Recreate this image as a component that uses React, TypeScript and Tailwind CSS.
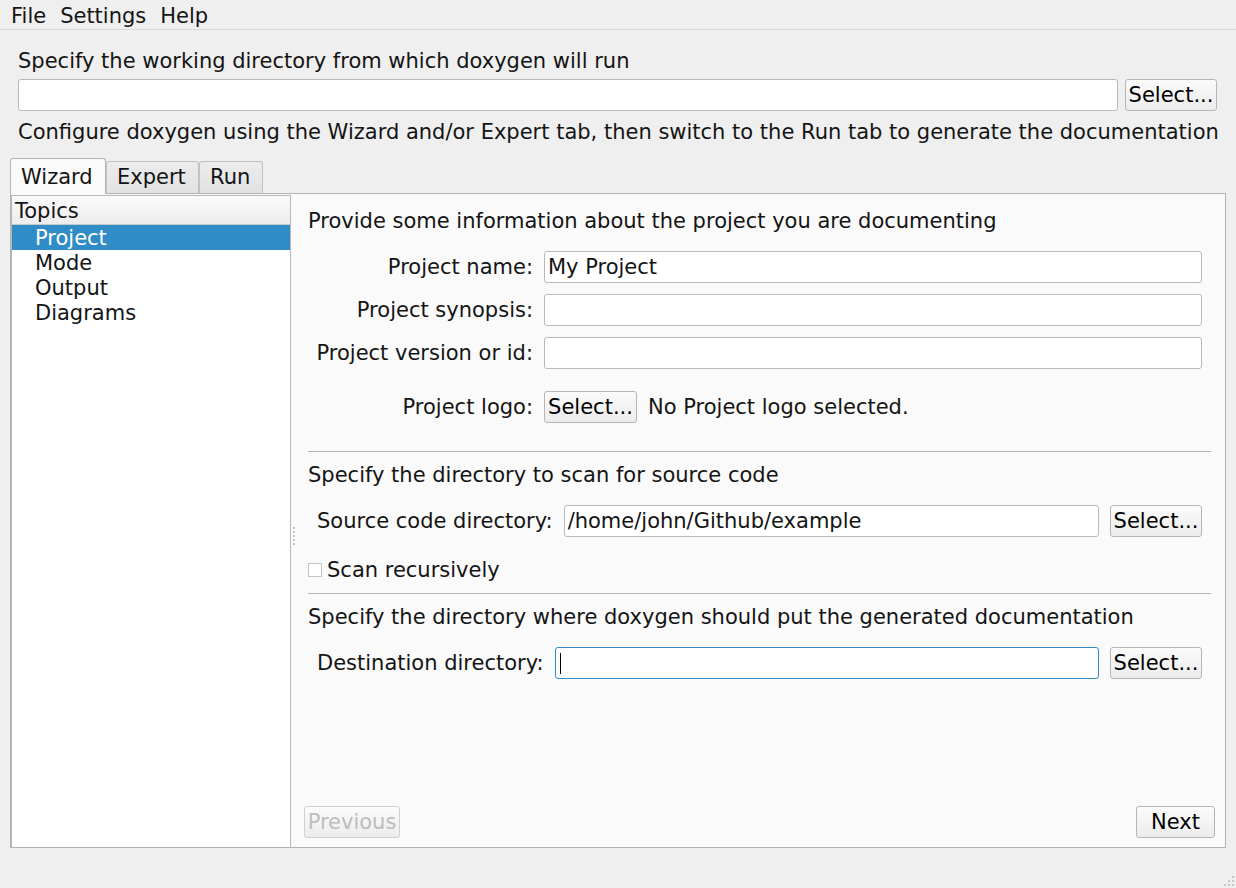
import React from "react";

function Button({ label, width, disabled }: { label: string; width: number; disabled?: boolean }) {
  return (
    <button
      style={{ width }}
      className={`h-[32px] shrink-0 rounded-[3px] border bg-gradient-to-b from-[#fbfbfb] to-[#ececec] text-[21px] leading-[24px] ${
        disabled ? "border-[#cfcfcf] text-[#bdbdbd]" : "border-[#b6b6b6] text-black"
      }`}
    >
      {label}
    </button>
  );
}

function TextInput({ value, focused }: { value?: string; focused?: boolean }) {
  return (
    <div
      className={`relative flex h-[32px] flex-1 items-center rounded-[3px] border bg-white pl-[3px] leading-[24px] ${
        focused ? "border-[#308cc6]" : "border-[#b9b9b9]"
      }`}
    >
      {value}
      {focused && <span className="ml-[1px] h-[21px] w-px bg-black" />}
    </div>
  );
}

function FormRow({ label, value }: { label: string; value?: string }) {
  return (
    <div className="flex items-center">
      <span className="w-[225px] shrink-0 text-right leading-[24px]">{label}</span>
      <div className="ml-[11px] mr-[9px] flex flex-1">
        <TextInput value={value} />
      </div>
    </div>
  );
}

export default function App() {
  const topics = ["Project", "Mode", "Output", "Diagrams"];

  return (
    <div className="flex h-[888px] w-[1236px] flex-col overflow-hidden bg-[#efefef] font-['DejaVu_Sans',sans-serif] text-[21px] text-[#141414]">
      {/* Menu bar */}
      <div className="flex h-[30px] shrink-0 border-b border-[#d9d9d9] pl-[4px] pt-[4px] leading-[24px]">
        {["File", "Settings", "Help"].map((m) => (
          <span key={m} className="px-[7px]">{m}</span>
        ))}
      </div>

      {/* Working directory */}
      <div className="flex flex-col px-[18px]">
        <div className="mt-[19px] leading-[24px]">Specify the working directory from which doxygen will run</div>
        <div className="mt-[6px] flex gap-[7px] pr-[1px]">
          <TextInput />
          <Button label="Select..." width={92} />
        </div>
        <div className="mt-[9px] whitespace-nowrap leading-[24px]">
          Configure doxygen using the Wizard and/or Expert tab, then switch to the Run tab to generate the documentation
        </div>
      </div>

      {/* Tabs */}
      <div className="mt-[14px] flex h-[35px] items-end px-[10px]">
        <div className="relative z-10 -mb-px flex h-[36px] w-[96px] items-start rounded-t-[3px] border border-b-0 border-[#b2b2b2] bg-[#fafafa] pl-[10px] pt-[6px] leading-[24px]">
          Wizard
        </div>
        <div className="flex h-[32px] w-[93px] items-start rounded-t-[3px] border border-b-0 border-[#c2c2c2] bg-gradient-to-b from-[#ececec] to-[#e2e2e2] pl-[10px] pt-[3px] leading-[24px]">
          Expert
        </div>
        <div className="flex h-[32px] w-[64px] items-start rounded-t-[3px] border border-b-0 border-[#c2c2c2] bg-gradient-to-b from-[#ececec] to-[#e2e2e2] pl-[10px] pt-[3px] leading-[24px]">
          Run
        </div>
      </div>

      {/* Tab pane */}
      <div className="mx-[10px] flex h-[655px] border border-[#b2b2b2] bg-[#fafafa] pt-[1px]">
        {/* Topics tree */}
        <div className="flex w-[280px] shrink-0 flex-col border border-b-0 border-[#b8b8b8] bg-white">
          <div className="h-[29px] border-b border-[#c8c8c8] bg-gradient-to-b from-[#fafafa] to-[#ededed] pl-[3px] pt-[3px] leading-[24px]">
            Topics
          </div>
          {topics.map((t, i) => (
            <div
              key={t}
              className={`h-[25px] pl-[23px] pt-[1px] leading-[24px] ${i === 0 ? "bg-[#308cc6] text-white" : ""}`}
            >
              {t}
            </div>
          ))}
        </div>

        {/* Splitter handle */}
        <div className="flex w-[4px] shrink-0 flex-col items-center justify-center gap-[2px] pl-[1px] pt-[30px]">
          {[0, 1, 2, 3, 4].map((d) => (
            <span key={d} className="h-[2px] w-[2px] bg-[#c4c4c4]" />
          ))}
        </div>

        {/* Wizard page */}
        <div className="flex flex-1 flex-col pl-[13px] pr-[14px] pt-[14px] pb-[9px]">
          <div className="leading-[24px]">Provide some information about the project you are documenting</div>

          <div className="mt-[18px] flex flex-col gap-[11px]">
            <FormRow label="Project name:" value="My Project" />
            <FormRow label="Project synopsis:" />
            <FormRow label="Project version or id:" />
          </div>

          <div className="mt-[22px] flex items-center">
            <span className="w-[225px] shrink-0 text-right leading-[24px]">Project logo:</span>
            <div className="ml-[11px]">
              <Button label="Select..." width={93} />
            </div>
            <span className="ml-[11px] leading-[24px]">No Project logo selected.</span>
          </div>

          <div className="mt-[27px] h-px bg-[#b4b4b4]" />

          <div className="mt-[11px] leading-[24px]">Specify the directory to scan for source code</div>

          <div className="mt-[18px] flex items-center pl-[9px] pr-[9px]">
            <span className="leading-[24px]">Source code directory:</span>
            <div className="ml-[11px] flex flex-1">
              <TextInput value="/home/john/Github/example" />
            </div>
            <div className="ml-[11px]">
              <Button label="Select..." width={92} />
            </div>
          </div>

          <div className="mt-[21px] flex h-[24px] items-center">
            <span className="h-[14px] w-[14px] border border-[#c4c4c4] bg-white" />
            <span className="ml-[5px] leading-[24px]">Scan recursively</span>
          </div>

          <div className="mt-[11px] h-px bg-[#b4b4b4]" />

          <div className="mt-[11px] leading-[24px]">Specify the directory where doxygen should put the generated documentation</div>

          <div className="mt-[18px] flex items-center pl-[9px] pr-[9px]">
            <span className="leading-[24px]">Destination directory:</span>
            <div className="ml-[11px] flex flex-1">
              <TextInput focused />
            </div>
            <div className="ml-[11px]">
              <Button label="Select..." width={92} />
            </div>
          </div>

          <div className="-mx-[4px] mt-auto flex justify-between">
            <Button label="Previous" width={96} disabled />
            <Button label="Next" width={79} />
          </div>
        </div>
      </div>

      {/* Status area with size grip */}
      <div className="flex flex-1 items-end justify-end pb-[2px] pr-[2px]">
        <div className="grid grid-cols-3 gap-[2px]">
          {[0, 0, 1, 0, 1, 1, 1, 1, 1].map((v, i) => (
            <span key={i} className={`h-[2px] w-[2px] ${v ? "bg-[#c8c8c8]" : "bg-transparent"}`} />
          ))}
        </div>
      </div>
    </div>
  );
}
